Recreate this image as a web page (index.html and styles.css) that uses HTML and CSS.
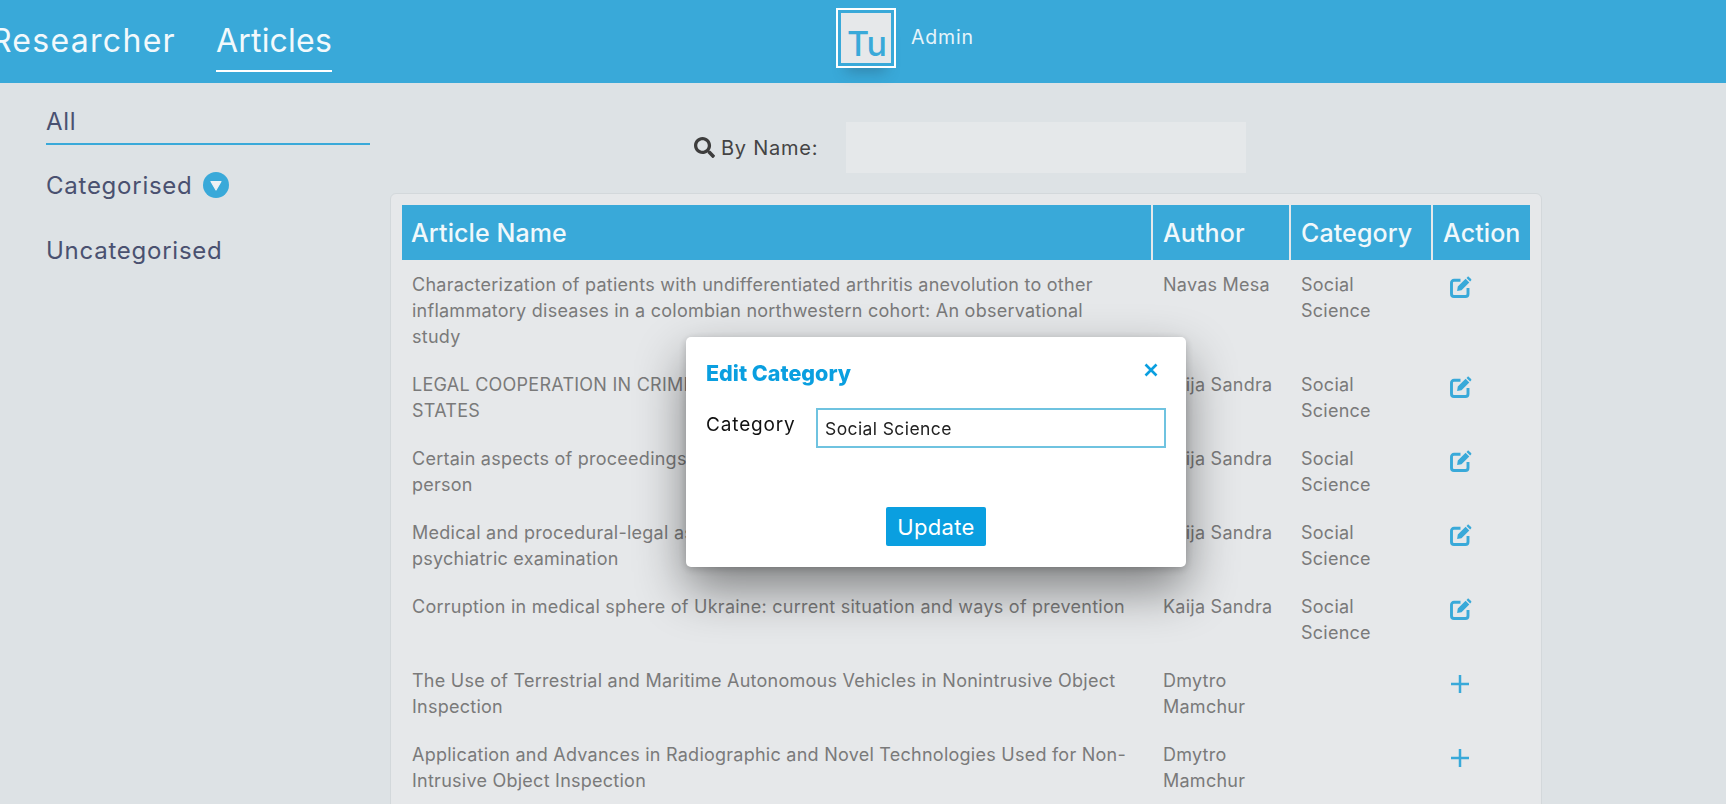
FILE: index.html
```html
<!DOCTYPE html>
<html lang="en">
<head>
  <meta charset="UTF-8">
  <meta name="viewport" content="width=device-width, initial-scale=1.0">
  <title>Articles</title>
  <link rel="stylesheet" href="styles.css">
</head>
<body>

<svg class="iconDefs" width="0" height="0">
  <symbol id="iconEdit" viewBox="0 0 22 22">
    <path d="M10.500 4.300H4a2.500 2.500 0 0 0-2.500 2.500V18A2.500 2.500 0 0 0 4 20.500h11.500A2.500 2.500 0 0 0 18 18v-6" fill="none" stroke="currentColor" stroke-width="2.900"/>
    <path d="M7.800 10.600l7.800-7.800 3.700 3.700-7.800 7.800-4.400.7zM16.500 1.900l1-1c.4-.4 1-.4 1.400 0l2.200 2.200c.4.4.4 1 0 1.400l-1 1z" fill="currentColor"/>
  </symbol>
  <symbol id="iconPlus" viewBox="0 0 18 18">
    <path d="M9 0v18M0 9h18" stroke="currentColor" stroke-width="2.500" fill="none"/>
  </symbol>
</svg>

<header class="topBar">
  <nav class="topNav">
    <a class="topNavLink wide">Researcher</a>
    <a class="topNavLink active">Articles</a>
  </nav>
  <div class="logoBox"><span class="logoInner">Tu</span></div>
  <span class="adminName">Admin</span>
</header>

<div class="pageBody">
  <aside class="sideMenu">
    <div class="sideItem active">All</div>
    <div class="sideItem second">
      Categorised
      <svg class="caretBadge" viewBox="0 0 26 26">
        <circle cx="13" cy="13" r="13" fill="#39a9d9"/>
        <path d="M8 9.500h10l-5 8.500z" fill="#eef2f4" stroke="#eef2f4" stroke-width="1.200" stroke-linejoin="round"/>
      </svg>
    </div>
    <div class="sideItem third">Uncategorised</div>
  </aside>

  <main class="content">
    <div class="searchRow">
      <svg class="searchIcon" viewBox="0 0 512 512"><path d="M505 442.700L405.300 343c-4.500-4.500-10.600-7-17-7H372c27.600-35.300 44-79.700 44-128C416 93.100 322.900 0 208 0S0 93.100 0 208s93.100 208 208 208c48.300 0 92.700-16.400 128-44v16.300c0 6.400 2.500 12.500 7 17l99.700 99.700c9.400 9.400 24.600 9.400 33.900 0l28.300-28.300c9.400-9.400 9.400-24.600.1-34zM208 336c-70.700 0-128-57.200-128-128 0-70.700 57.200-128 128-128 70.700 0 128 57.200 128 128 0 70.700-57.200 128-128 128z"/></svg>
      <label class="searchLabel" for="searchName">By Name:</label>
      <input class="searchInput" id="searchName" type="text">
    </div>

    <div class="tableCard">
      <table class="articleTable">
        <colgroup>
          <col class="colName">
          <col class="colAuthor">
          <col class="colCategory">
          <col class="colAction">
        </colgroup>
        <thead>
          <tr>
            <th>Article Name</th>
            <th>Author</th>
            <th>Category</th>
            <th>Action</th>
          </tr>
        </thead>
        <tbody>
          <tr>
            <td>Characterization of patients with undifferentiated arthritis anevolution to other<br>inflammatory diseases in a colombian northwestern cohort: An observational<br>study</td>
            <td>Navas Mesa</td>
            <td>Social<br>Science</td>
            <td class="actionCell"><svg class="editIcon"><use href="#iconEdit"/></svg></td>
          </tr>
          <tr>
            <td>LEGAL COOPERATION IN CRIMINAL MATTERS BETWEEN THE MEMBER<br>STATES</td>
            <td>Kaija Sandra</td>
            <td>Social<br>Science</td>
            <td class="actionCell"><svg class="editIcon"><use href="#iconEdit"/></svg></td>
          </tr>
          <tr>
            <td>Certain aspects of proceedings against an accused<br>person</td>
            <td>Kaija Sandra</td>
            <td>Social<br>Science</td>
            <td class="actionCell"><svg class="editIcon"><use href="#iconEdit"/></svg></td>
          </tr>
          <tr>
            <td>Medical and procedural-legal aspects of forensic<br>psychiatric examination</td>
            <td>Kaija Sandra</td>
            <td>Social<br>Science</td>
            <td class="actionCell"><svg class="editIcon"><use href="#iconEdit"/></svg></td>
          </tr>
          <tr>
            <td>Corruption in medical sphere of Ukraine: current situation and ways of prevention</td>
            <td>Kaija Sandra</td>
            <td>Social<br>Science</td>
            <td class="actionCell"><svg class="editIcon"><use href="#iconEdit"/></svg></td>
          </tr>
          <tr>
            <td>The Use of Terrestrial and Maritime Autonomous Vehicles in Nonintrusive Object<br>Inspection</td>
            <td>Dmytro<br>Mamchur</td>
            <td></td>
            <td class="actionCell"><svg class="plusIcon"><use href="#iconPlus"/></svg></td>
          </tr>
          <tr>
            <td>Application and Advances in Radiographic and Novel Technologies Used for Non-<br>Intrusive Object Inspection</td>
            <td>Dmytro<br>Mamchur</td>
            <td></td>
            <td class="actionCell"><svg class="plusIcon"><use href="#iconPlus"/></svg></td>
          </tr>
        </tbody>
      </table>
    </div>
  </main>
</div>

<div class="modal">
  <div class="modalHead">
    <h3 class="modalTitle">Edit Category</h3>
    <svg class="modalClose" viewBox="0 0 14 14"><path d="M1.500 1.500l11 11M12.500 1.500l-11 11" stroke="#0a9fe0" stroke-width="2.600" fill="none"/></svg>
  </div>
  <div class="modalField">
    <label class="modalLabel" for="categoryInput">Category</label>
    <input class="modalInput" id="categoryInput" type="text" value="Social Science">
  </div>
  <div class="modalFoot">
    <button class="updateBtn">Update</button>
  </div>
</div>

</body>
</html>
```

FILE: styles.css
```css
* {
  box-sizing: border-box;
}
html, body {
  height: 100%;
}
body {
  margin: 0;
  overflow: hidden;
  background-color: #dde2e5;
  font-family: Inter, "Open Sans", sans-serif;
}
.iconDefs {
  display: block;
  height: 0;
}

/* top bar */
.topBar {
  display: flex;
  align-items: flex-start;
  height: 83px;
  background-color: #39a9d9;
  color: #fff;
}
.topNav {
  display: flex;
  flex-shrink: 0;
  justify-content: flex-end;
  gap: 40px;
  width: 332px;
  white-space: nowrap;
}
.topNavLink {
  height: 72px;
  padding-top: 19px;
  font-size: 32px;
  line-height: 44px;
  letter-spacing: .2px;
  color: #f2f9fc;
}
.topNavLink.wide {
  letter-spacing: 1.300px;
}
.topNavLink.active {
  border-bottom: 2px solid #fff;
}
.logoBox {
  position: relative;
  width: 60px;
  height: 60px;
  margin-top: 8px;
  margin-left: 504px;
  padding: 3px;
  border: 2px solid #fff;
  box-shadow: 0 14px 14px -10px rgba(40, 70, 90, .35);
}
.logoInner {
  display: block;
  height: 100%;
  padding-top: 12px;
  padding-left: 2px;
  background-color: #e6e8ea;
  color: #39a9d9;
  font-size: 34px;
  font-weight: 500;
  line-height: 38px;
  text-align: center;
}
.adminName {
  margin-top: 24px;
  margin-left: 15px;
  font-size: 19.500px;
  line-height: 26px;
  letter-spacing: .8px;
  color: #e6f4fa;
}

/* sidebar */
.pageBody {
  display: flex;
}
.sideMenu {
  flex-shrink: 0;
  width: 324px;
  margin-left: 46px;
  padding-top: 18px;
  font-size: 24px;
  letter-spacing: .75px;
  color: #4a5170;
}
.sideItem {
  display: flex;
  align-items: center;
  height: 40px;
}
.sideItem.active {
  height: 44px;
  padding-bottom: 2px;
  border-bottom: 2px solid #39a9d9;
}
.sideItem.second {
  margin-top: 20px;
}
.sideItem.third {
  margin-top: 25px;
}
.caretBadge {
  width: 26px;
  height: 26px;
  margin-left: 10px;
}

/* search + table */
.content {
  width: 1152px;
  margin-left: 20px;
  padding-top: 39px;
}
.searchRow {
  display: flex;
  align-items: center;
  height: 51px;
  margin-bottom: 20px;
  padding-left: 304px;
}
.searchIcon {
  width: 21px;
  height: 21px;
  fill: #3d3d3d;
}
.searchLabel {
  width: 131px;
  padding-left: 6px;
  font-size: 20px;
  letter-spacing: .75px;
  color: #444;
}
.searchInput {
  width: 400px;
  height: 51px;
  border: none;
  background-color: #e5e8ea;
}
.tableCard {
  padding: 11px;
  border: 1px solid #d3d8db;
  border-radius: 6px;
  background-color: #e6e8ea;
}
.articleTable {
  width: 1128px;
  border-collapse: collapse;
  table-layout: fixed;
}
.colName {
  width: 750px;
}
.colAuthor {
  width: 138px;
}
.colCategory {
  width: 142px;
}
.colAction {
  width: 98px;
}
.articleTable th {
  height: 55px;
  padding: 0 10px;
  background-color: #39a9d9;
  border-right: 2px solid #e6e8ea;
  color: #f0f8fb;
  font-size: 25px;
  font-weight: 500;
  letter-spacing: .1px;
  text-align: left;
}
.articleTable th:first-child {
  padding-left: 9px;
}
.articleTable th:last-child {
  border-right: none;
}
.articleTable td {
  padding: 12px 0 10px 11px;
  color: #7a7a7a;
  font-size: 18px;
  line-height: 26px;
  letter-spacing: .25px;
  vertical-align: top;
  white-space: nowrap;
}
.articleTable td:first-child {
  padding-left: 10px;
}
.articleTable td.actionCell {
  padding-left: 18px;
}
.editIcon {
  display: block;
  width: 22px;
  height: 22px;
  margin-top: 4px;
  color: #39a9d9;
}
.plusIcon {
  display: block;
  width: 18px;
  height: 18px;
  margin-top: 7px;
  margin-left: 1px;
  color: #39a9d9;
}

/* popup */
.modal {
  position: fixed;
  top: 337px;
  left: 686px;
  width: 500px;
  height: 230px;
  padding: 20px;
  border-radius: 5px;
  background-color: #fff;
  box-shadow: 0 22px 50px rgba(0, 0, 0, .45), 0 2px 8px rgba(0, 0, 0, .2);
}
.modalHead {
  display: flex;
  justify-content: space-between;
  height: 32px;
}
.modalTitle {
  margin: 0;
  color: #0a9fe0;
  font-size: 21.500px;
  font-weight: 800;
  line-height: 32px;
}
.modalClose {
  width: 14px;
  height: 14px;
  margin-top: 6px;
  margin-right: 8px;
}
.modalField {
  display: flex;
  margin-top: 19px;
}
.modalLabel {
  width: 110px;
  padding-top: 2px;
  font-size: 19px;
  line-height: 30px;
  letter-spacing: .85px;
  color: #111;
}
.modalInput {
  width: 350px;
  height: 40px;
  padding: 0 7px;
  border: 2px solid #6fc3e0;
  font-family: inherit;
  font-size: 17.500px;
  letter-spacing: .4px;
  color: #222;
}
.modalFoot {
  display: flex;
  justify-content: center;
  margin-top: 59px;
}
.updateBtn {
  width: 100px;
  height: 39px;
  border: none;
  border-radius: 2px;
  background-color: #0a9fe0;
  color: #fff;
  font-family: inherit;
  font-size: 22px;
  letter-spacing: .3px;
}
```
